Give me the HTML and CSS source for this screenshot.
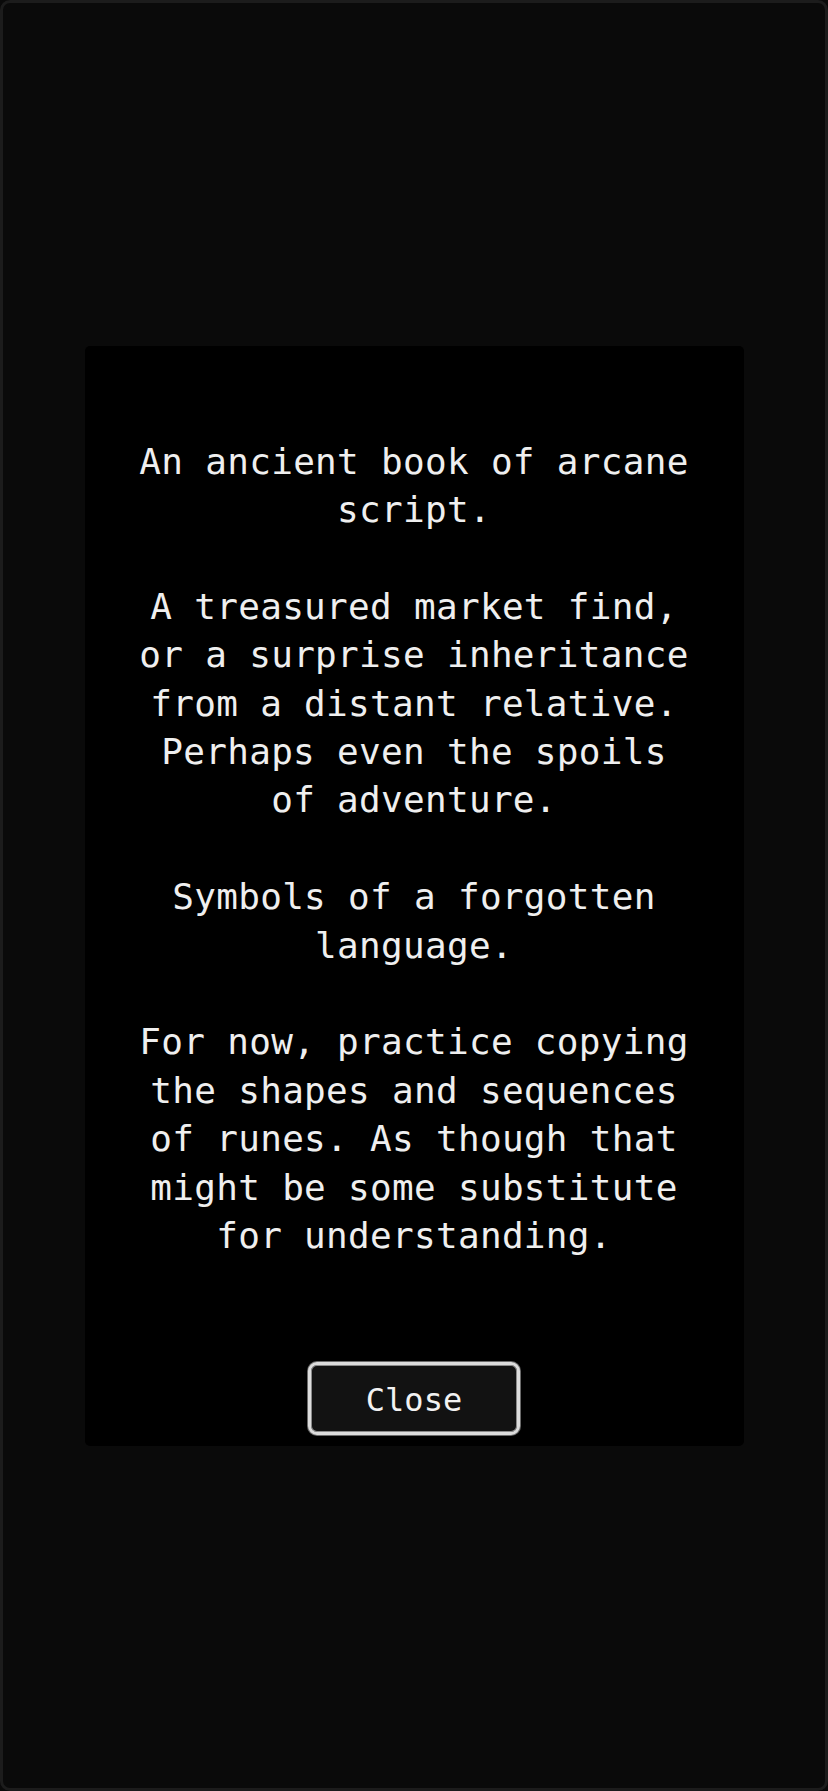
FILE: index.html
```html
<!DOCTYPE html>
<html lang="en">
<head>
<meta charset="utf-8">
<title>Arcane Book</title>
<link rel="stylesheet" href="styles.css">
</head>
<body>
<div class="frame">
  <div class="panel">
    <div class="story">
      <p>An ancient book of arcane<br>script.</p>
      <p>A treasured market find,<br>or a surprise inheritance<br>from a distant relative.<br>Perhaps even the spoils<br>of adventure.</p>
      <p>Symbols of a forgotten<br>language.</p>
      <p>For now, practice copying<br>the shapes and sequences<br>of runes. As though that<br>might be some substitute<br>for understanding.</p>
    </div>
    <button class="close-btn" type="button">Close</button>
  </div>
</div>
</body>
</html>
```
FILE: styles.css
```css
html, body {
  margin: 0;
  padding: 0;
  height: 100%;
  background: #0a0a0a;
}

.frame {
  box-sizing: border-box;
  height: 1791px;
  width: 828px;
  border: 3px solid #1c1c1c;
  border-radius: 10px;
  background: #0a0a0a;
  display: flex;
  align-items: center;
  justify-content: center;
}

.panel {
  box-sizing: border-box;
  width: 659px;
  height: 1100px;
  background: #000;
  border-radius: 5px;
  padding: 92px 0 11px;
  display: flex;
  flex-direction: column;
  align-items: center;
  font-family: "DejaVu Sans Mono", "Liberation Mono", monospace;
  color: #efefef;
}

.story {
  text-align: center;
  font-size: 36px;
  line-height: 48.4px;
  letter-spacing: 0.3px;
}

.story p {
  margin: 0 0 48.4px;
}

.story p:last-child {
  margin-bottom: 0;
}

.close-btn {
  margin-top: auto;
  box-sizing: border-box;
  width: 212px;
  height: 73px;
  background: #121212;
  color: #f2f2f2;
  border: 3px solid #dcdcdc;
  border-radius: 9px;
  box-shadow: 0 0 0 1px #6a6a6a, inset 0 0 0 1px #8a8a8a;
  font-family: "DejaVu Sans Mono", "Liberation Mono", monospace;
  font-size: 32px;
  padding: 4px 0 0;
}
```
